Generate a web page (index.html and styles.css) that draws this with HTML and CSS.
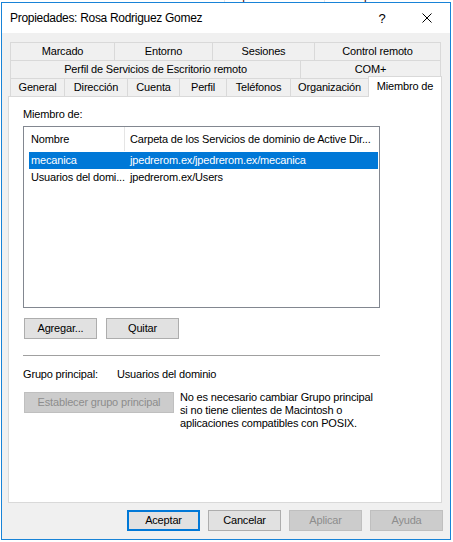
FILE: index.html
```html
<!DOCTYPE html>
<html lang="es">
<head>
<meta charset="utf-8">
<title>Propiedades: Rosa Rodriguez Gomez</title>
<link rel="stylesheet" href="styles.css">
</head>
<body>
<div class="behind">
  <div class="bcell c1"><span>Nombre</span></div>
  <div class="bcell c2"><span>Tipo</span></div>
  <div class="bcell c3"><span>Descripción</span></div>
</div>
<div class="window">
  <div class="titlebar">
    <span class="title">Propiedades: Rosa Rodriguez Gomez</span>
    <span class="help">?</span>
    <svg class="close" width="10" height="10" viewBox="0 0 10 10"><path d="M0.5 0.5 L9.5 9.5 M9.5 0.5 L0.5 9.5" stroke="#000" stroke-width="1" fill="none"/></svg>
  </div>
  <div class="body">
    <div class="tabs">
      <div class="tabrow">
        <div class="tab w104">Marcado</div>
        <div class="tab w98">Entorno</div>
        <div class="tab w102">Sesiones</div>
        <div class="tab w127">Control remoto</div>
      </div>
      <div class="tabrow">
        <div class="tab w290">Perfil de Servicios de Escritorio remoto</div>
        <div class="tab w141">COM+</div>
      </div>
      <div class="tabrow">
        <div class="tab w54">General</div>
        <div class="tab w63">Dirección</div>
        <div class="tab w52">Cuenta</div>
        <div class="tab w47">Perfil</div>
        <div class="tab w64">Teléfonos</div>
        <div class="tab w78">Organización</div>
        <div class="tab active">Miembro de</div>
      </div>
    </div>
    <div class="panel">
      <div class="label">Miembro de:</div>
      <div class="listview">
        <div class="lv-head">
          <div class="h1">Nombre</div>
          <div class="h2">Carpeta de los Servicios de dominio de Active Dir...</div>
        </div>
        <div class="lv-rows">
          <div class="row sel"><div class="c1">mecanica</div><div class="c2">jpedrerom.ex/jpedrerom.ex/mecanica</div></div>
          <div class="row"><div class="c1">Usuarios del domi...</div><div class="c2">jpedrerom.ex/Users</div></div>
        </div>
      </div>
      <div class="btnrow">
        <div class="btn">Agregar...</div>
        <div class="btn">Quitar</div>
      </div>
      <div class="sep"></div>
      <div class="grupo">
        <div class="glabel">Grupo principal:</div>
        <div class="gvalue">Usuarios del dominio</div>
      </div>
      <div class="estrow">
        <div class="btn dis wide">Establecer grupo principal</div>
        <div class="note">No es necesario cambiar Grupo principal<br>si no tiene clientes de Macintosh o<br>aplicaciones compatibles con POSIX.</div>
      </div>
    </div>
    <div class="footer">
      <div class="btn default">Aceptar</div>
      <div class="btn">Cancelar</div>
      <div class="btn dis">Aplicar</div>
      <div class="btn dis">Ayuda</div>
    </div>
  </div>
</div>
</body>
</html>
```
FILE: styles.css
```css
* { box-sizing: border-box; margin: 0; padding: 0; }

body {
  margin: 0;
  width: 453px;
  height: 542px;
  overflow: hidden;
  background: #fff;
  color: #000;
  font-family: "Liberation Sans", Arial, sans-serif;
  font-size: 11px;
  letter-spacing: -0.17px;
}

/* strip of the list behind the dialog */
.behind {
  height: 2px;
  overflow: hidden;
  display: flex;
  font-size: 12px;
  line-height: 12px;
  color: #3a1010;
}
.bcell { height: 14px; margin-top: -10px; white-space: nowrap; }
.behind .c1 { width: 225px; padding-left: 8px; border-right: 1px solid #e5e5e5; }
.behind .c2 { width: 100px; padding-left: 8px; border-right: 1px solid #e5e5e5; }
.behind .c3 { padding-left: 6px; }

.window {
  margin-left: 1px;
  width: 450px;
  height: 538px;
  border: 1px solid #1883d7;
  background: #f0f0f0;
  display: flex;
  flex-direction: column;
}

.titlebar {
  height: 30px;
  flex: none;
  background: #fff;
  display: flex;
  align-items: center;
  padding-left: 8px;
  font-size: 12px;
  letter-spacing: -0.3px;
}
.title { flex: 1; }
.help { width: 10px; text-align: center; font-size: 13px; margin-right: 35px; }
.close { display: block; width: 10px; height: 10px; margin-right: 18px; }

.body { flex: 1; padding-top: 9px; }

.tabs { margin-left: 8px; }
.tabrow { display: flex; height: 18px; align-items: flex-start; }
.tab {
  height: 18px;
  border-top: 1px solid #d9d9d9;
  border-left: 1px solid #d9d9d9;
  text-align: center;
  line-height: 17px;
  white-space: nowrap;
}
.tabrow .tab:last-child { border-right: 1px solid #d9d9d9; }
.w104 { width: 104px; }
.w98 { width: 98px; }
.w102 { width: 102px; }
.w127 { width: 127px; }
.w290 { width: 290px; }
.w141 { width: 141px; }
.w54 { width: 54px; }
.w63 { width: 63px; }
.w52 { width: 52px; }
.w47 { width: 47px; }
.w64 { width: 64px; }
.w78 { width: 78px; }
.tab.active {
  width: 74px;
  height: 21px;
  margin-top: -2px;
  background: #fff;
  line-height: 18px;
  position: relative;
  z-index: 1;
}

.panel {
  margin-left: 6px;
  width: 434px;
  height: 407px;
  border: 1px solid #d9d9d9;
  background: #fff;
  padding: 11px 0 0 14px;
}
.label { line-height: 13px; }

.listview {
  margin-top: 5px;
  width: 357px;
  height: 182px;
  border: 1px solid #828790;
}
.lv-head { display: flex; height: 24px; line-height: 25px; white-space: nowrap; }
.lv-head .h1 { width: 101px; padding-left: 7px; border-right: 1px solid #e5e5e5; }
.lv-head .h2 { padding-left: 5px; overflow: hidden; }
.lv-rows { padding: 1px 0 0 5px; }
.row { display: flex; width: 349px; height: 17px; line-height: 17px; white-space: nowrap; }
.row .c1 { width: 101px; padding-left: 2px; overflow: hidden; }
.row.sel { background: #0078d7; color: #fff; }

.btn {
  width: 73px;
  height: 21px;
  background: #e1e1e1;
  border: 1px solid #adadad;
  text-align: center;
  line-height: 19px;
  white-space: nowrap;
}
.btn.dis { background: #cccccc; border-color: #bfbfbf; color: #8d8d8d; }
.btn.default { border: 2px solid #0078d7; line-height: 17px; }
.btn.wide { width: 150px; }

.btnrow { margin-top: 10px; margin-left: 1px; display: flex; gap: 9px; }
.sep { margin-top: 16px; width: 357px; height: 1px; background: #a0a0a0; }

.grupo { margin-top: 12px; display: flex; line-height: 13px; }
.glabel { width: 94px; }

.estrow { margin-top: 11px; margin-left: 1px; display: flex; align-items: flex-start; }
.note { margin-left: 6px; margin-top: -1px; line-height: 13px; white-space: nowrap; }

.footer {
  margin-top: 7px;
  padding-right: 7px;
  display: flex;
  justify-content: flex-end;
  gap: 8px;
}
```
